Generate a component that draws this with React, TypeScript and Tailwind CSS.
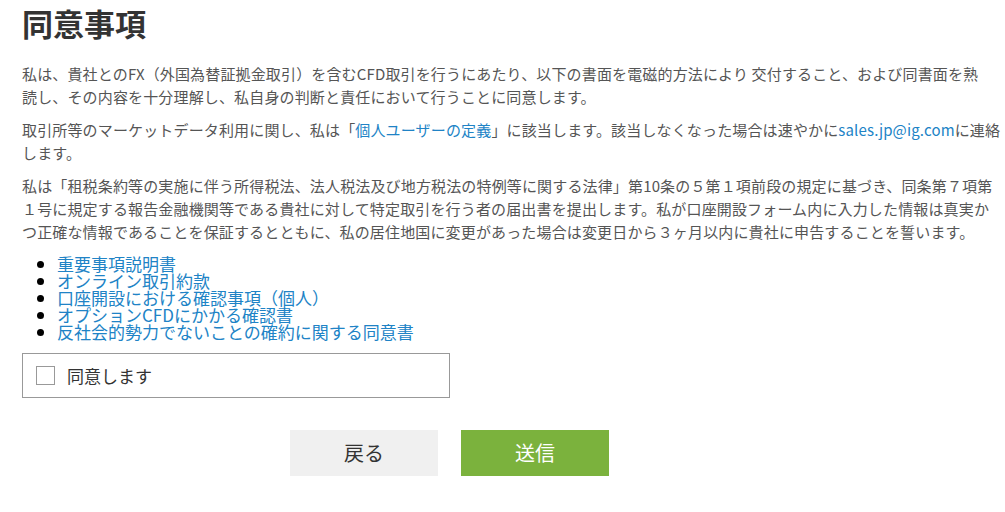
import React from 'react';

const links = [
  '重要事項説明書',
  'オンライン取引約款',
  '口座開設における確認事項（個人）',
  'オプションCFDにかかる確認書',
  '反社会的勢力でないことの確約に関する同意書',
];

const App: React.FC = () => {
  const [agreed, setAgreed] = React.useState(false);

  return (
    <div
      className="w-[1005px] h-[512px] bg-white px-[22px] pt-[4px]"
      style={{ fontFamily: '"Noto Sans CJK JP", "Noto Sans", sans-serif' }}
    >
      <h1 className="text-[31px] leading-[38px] font-bold text-[#333]">同意事項</h1>
      <div className="mt-[20px] w-[980px] text-[15px] leading-[23px] tracking-[0.15px] text-[#555] whitespace-nowrap">
        <p>
          私は、貴社とのFX（外国為替証拠金取引）を含むCFD取引を行うにあたり、以下の書面を電磁的方法により 交付すること、および同書面を熟
          <br />
          読し、その内容を十分理解し、私自身の判断と責任において行うことに同意します。
        </p>
        <p className="mt-[10px]">
          取引所等のマーケットデータ利用に関し、私は「<a className="text-[#2083c6]">個人ユーザーの定義</a>」に該当します。該当しなくなった場合は速やかに<a className="text-[#2083c6]">sales.jp@ig.com</a>に連絡
          <br />
          します。
        </p>
        <p className="mt-[10px]">
          私は「租税条約等の実施に伴う所得税法、法人税法及び地方税法の特例等に関する法律」第10条の５第１項前段の規定に基づき、同条第７項第
          <br />
          １号に規定する報告金融機関等である貴社に対して特定取引を行う者の届出書を提出します。私が口座開設フォーム内に入力した情報は真実か
          <br />
          つ正確な情報であることを保証するとともに、私の居住地国に変更があった場合は変更日から３ヶ月以内に貴社に申告することを誓います。
        </p>
      </div>
      <ul className="mt-[12px] pl-[35px] list-disc text-[17px] leading-[17px] text-[#2083c6] marker:text-black">
        {links.map((l) => (
          <li key={l}>
            <a className="cursor-pointer">{l}</a>
          </li>
        ))}
      </ul>
      <label className="mt-[13px] w-[428px] h-[45px] border border-[#999] flex items-center pl-[13px] cursor-pointer">
        <input
          type="checkbox"
          checked={agreed}
          onChange={(e) => setAgreed(e.target.checked)}
          className="appearance-none w-[19px] h-[19px] border border-[#999] bg-white"
        />
        <span className="ml-[12px] text-[17px] text-[#333]">同意します</span>
      </label>
      <div className="mt-[32px] flex gap-[23px] pl-[268px]">
        <button className="w-[148px] h-[46px] bg-[#f0f0f0] text-[20px] text-[#333]">戻る</button>
        <button className="w-[148px] h-[46px] bg-[#7bb23d] text-[20px] text-white">送信</button>
      </div>
    </div>
  );
};

export default App;
